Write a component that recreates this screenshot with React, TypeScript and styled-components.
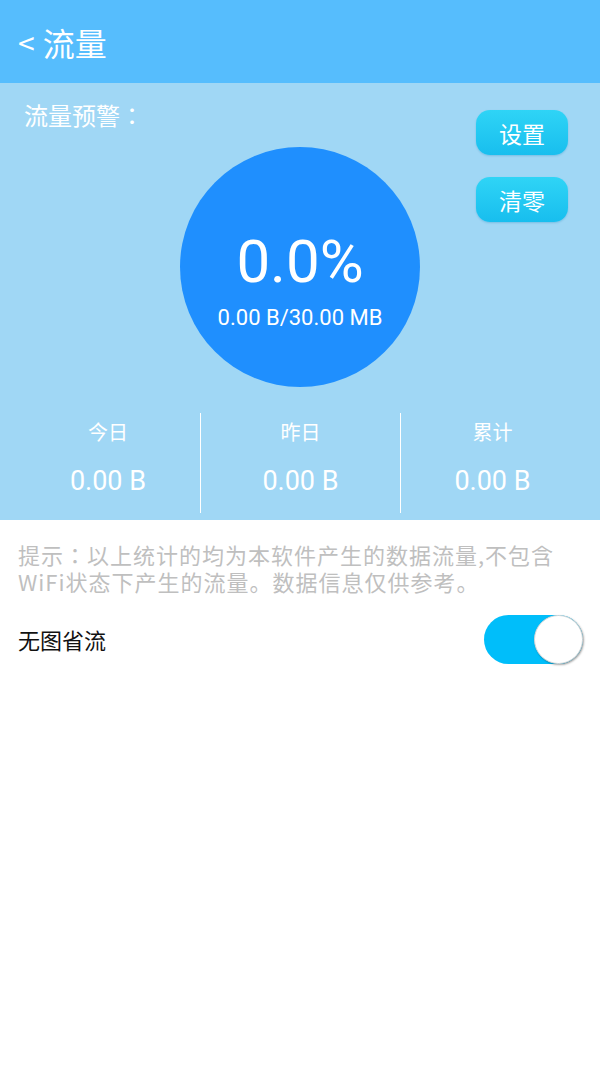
import * as React from 'react';
import styled, { createGlobalStyle } from 'styled-components';

const GlobalStyle = createGlobalStyle`
    html, body {
        margin: 0;
        padding: 0;
        background: #ffffff;
    }
    body {
        font-family: Roboto, "Noto Sans CJK SC", "Noto Sans", sans-serif;
    }
`

// *** Styled Components ***
const Page = styled.div`
    width: 600px;
    min-height: 1067px;
    background: #ffffff;
`
const Header = styled.header`
    height: 83px;
    background-color: #56BDFD;
    display: flex;
    align-items: center;
    padding-left: 18px;
    box-sizing: border-box;
    color: #ffffff;
    font-family: "Noto Sans CJK SC", sans-serif;
    font-size: 32px;
`
const BackArrow = styled.span`
    margin-right: 8px;
    font-size: 30px;
`
const Panel = styled.section`
    background-color: #A0D7F5;
    padding-bottom: 7px;
`
const TopArea = styled.div`
    display: grid;
    grid-template-columns: 1fr 240px 1fr;
`
// JP face: full-width colon centred, full stop low-left, as on the phone
const WarnLabel = styled.div`
    padding: 14px 0 0 24px;
    color: #ffffff;
    font-family: "Noto Sans CJK JP", sans-serif;
    font-size: 24px;
    white-space: nowrap;
`
const Circle = styled.div`
    margin-top: 64px;
    width: 240px;
    height: 240px;
    padding-top: 24px;
    box-sizing: border-box;
    border-radius: 50%;
    background-color: #1F8FFE;
    color: #ffffff;
    display: flex;
    flex-direction: column;
    align-items: center;
    justify-content: center;
`
const Percent = styled.div`
    font-family: Roboto, sans-serif;
    font-size: 60px;
    line-height: 66px;
`
const Usage = styled.div`
    font-family: Roboto, sans-serif;
    font-size: 22px;
    margin-top: 10px;
`
const ButtonColumn = styled.div`
    display: flex;
    flex-direction: column;
    align-items: flex-end;
    gap: 22px;
    padding: 27px 32px 0 0;
`
const PillButton = styled.button`
    width: 92px;
    height: 45px;
    border: none;
    border-radius: 14px;
    background: linear-gradient(#2FD4F6, #18BEEE);
    box-shadow: 0 1px 2px rgba(0, 120, 180, 0.25);
    color: #ffffff;
    font-family: "Noto Sans CJK SC", sans-serif;
    font-size: 23px;
    padding: 0;
`
const Stats = styled.div`
    display: grid;
    grid-template-columns: repeat(3, 1fr);
    margin-top: 26px;
`
const StatCell = styled.div<{ $divider?: boolean }>`
    height: 100px;
    display: flex;
    flex-direction: column;
    align-items: center;
    color: #ffffff;
    border-left: ${p => (p.$divider ? '1px solid #ffffff' : 'none')};
    &:first-child {
        padding-left: 16px;
    }
    &:last-child {
        padding-right: 16px;
    }
`
const StatLabel = styled.div`
    font-family: "Noto Sans CJK SC", sans-serif;
    font-size: 20px;
    margin-top: 4px;
`
const StatValue = styled.div`
    font-family: Roboto, sans-serif;
    font-size: 27px;
    margin-top: 19px;
`
const Hint = styled.p`
    margin: 0;
    padding: 21px 18px 0;
    color: #BFBFBF;
    font-family: "Noto Sans CJK JP", sans-serif;
    font-size: 22px;
    line-height: 27px;
    letter-spacing: 1px;
`
const OptionRow = styled.div`
    display: flex;
    align-items: center;
    justify-content: space-between;
    padding: 0 17px 0 18px;
    margin-top: 19px;
    height: 50px;
`
const OptionLabel = styled.span`
    font-family: "Noto Sans CJK SC", sans-serif;
    font-size: 22px;
    color: #111111;
`
const Toggle = styled.div<{ $on: boolean }>`
    width: 99px;
    height: 49px;
    border-radius: 25px;
    background-color: ${p => (p.$on ? '#00BEFA' : '#cccccc')};
    display: flex;
    align-items: center;
    justify-content: ${p => (p.$on ? 'flex-end' : 'flex-start')};
    cursor: pointer;
`
const Knob = styled.div`
    width: 49px;
    height: 49px;
    border-radius: 50%;
    background: #ffffff;
    box-sizing: border-box;
    border: 1px solid #d8d8d8;
    box-shadow: 1px 1px 2px rgba(0, 0, 0, 0.35);
`

const stats = [
    { label: '今日', value: '0.00 B' },
    { label: '昨日', value: '0.00 B' },
    { label: '累计', value: '0.00 B' },
]

export default function App() {
    const [saveMode, setSaveMode] = React.useState(true);

    return (
        <Page>
            <GlobalStyle />
            <Header>
                <BackArrow>&lt;</BackArrow>流量
            </Header>
            <Panel>
                <TopArea>
                    <WarnLabel>流量预警：</WarnLabel>
                    <Circle>
                        <Percent>0.0%</Percent>
                        <Usage>0.00 B/30.00 MB</Usage>
                    </Circle>
                    <ButtonColumn>
                        <PillButton>设置</PillButton>
                        <PillButton>清零</PillButton>
                    </ButtonColumn>
                </TopArea>
                <Stats>
                    {stats.map((s, index) => (
                        <StatCell key={s.label} $divider={index > 0}>
                            <StatLabel>{s.label}</StatLabel>
                            <StatValue>{s.value}</StatValue>
                        </StatCell>
                    ))}
                </Stats>
            </Panel>
            <Hint>提示：以上统计的均为本软件产生的数据流量,不包含WiFi状态下产生的流量。数据信息仅供参考。</Hint>
            <OptionRow>
                <OptionLabel>无图省流</OptionLabel>
                <Toggle $on={saveMode} onClick={() => setSaveMode(!saveMode)}>
                    <Knob />
                </Toggle>
            </OptionRow>
        </Page>
    )
}
